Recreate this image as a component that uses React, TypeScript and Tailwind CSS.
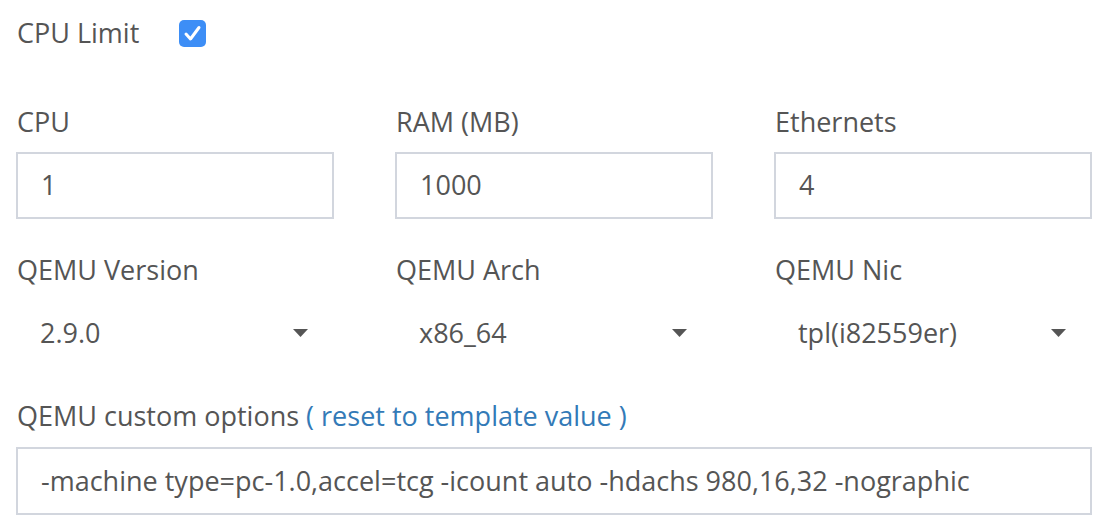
import React from "react";

const font = { fontFamily: '"Open Sans", "Noto Sans", sans-serif' };

function Arrow() {
  return (
    <svg width="15" height="8" viewBox="0 0 15 8" className="shrink-0">
      <polygon points="0,0 15,0 7.5,8" fill="#555" />
    </svg>
  );
}

function TextInput({ value, h }: { value: string; h: string }) {
  return (
    <div className={`${h} border-2 border-[#d2d6de] bg-white flex items-center pl-[23px] text-[27px] text-[#555] whitespace-nowrap`}>
      {value}
    </div>
  );
}

function Select({ value }: { value: string }) {
  return (
    <div className="h-[90px] flex items-center justify-between pl-[24px] pr-[26px] text-[27px] text-[#555]">
      <span>{value}</span>
      <Arrow />
    </div>
  );
}

export default function App() {
  return (
    <div
      className="w-[1110px] h-[518px] bg-white text-[#555] overflow-hidden pl-[16px] pr-[18px]"
      style={font}
    >
      <div className="flex items-center h-[66px] pl-[1px]">
        <span className="text-[27px] text-[#555]">CPU Limit</span>
        <div className="ml-[40px] w-[27px] h-[27px] rounded-[5px] bg-[#3d8ef6] flex items-center justify-center">
          <svg width="27" height="27" viewBox="0 0 27 27">
            <path d="M7 14 L11.5 19 L20 7.5" stroke="white" strokeWidth="3" fill="none" strokeLinecap="round" strokeLinejoin="round" />
          </svg>
        </div>
      </div>
      <div className="grid grid-cols-3 gap-x-[61px] mt-[38px]">
        {[
          ["CPU", "1"],
          ["RAM (MB)", "1000"],
          ["Ethernets", "4"],
        ].map(([l, v]) => (
          <div key={l} className="flex flex-col">
            <label className="text-[27px] pl-[1px] leading-[36px] mb-[12px] whitespace-nowrap">{l}</label>
            <TextInput value={v} h="h-[67px]" />
          </div>
        ))}
      </div>
      <div className="grid grid-cols-3 gap-x-[61px] mt-[33px]">
        {[
          ["QEMU Version", "2.9.0"],
          ["QEMU Arch", "x86_64"],
          ["QEMU Nic", "tpl(i82559er)"],
        ].map(([l, v]) => (
          <div key={l} className="flex flex-col">
            <label className="text-[27px] pl-[1px] leading-[36px] whitespace-nowrap">{l}</label>
            <Select value={v} />
          </div>
        ))}
      </div>
      <div className="mt-[20px] flex flex-col">
        <label className="text-[27px] pl-[1px] leading-[36px] mb-[13px] whitespace-nowrap">
          QEMU custom options{" "}
          <span className="text-[#337ab7]">( reset to template value )</span>
        </label>
        <TextInput value="-machine type=pc-1.0,accel=tcg -icount auto -hdachs 980,16,32 -nographic" h="h-[68px]" />
      </div>
    </div>
  );
}
